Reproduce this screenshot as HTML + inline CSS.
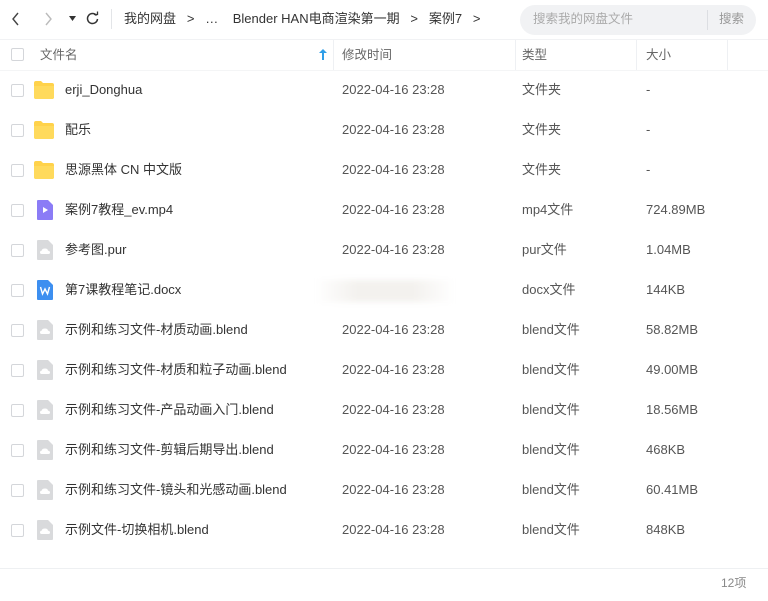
<!DOCTYPE html>
<html><head><meta charset="utf-8"><style>
*{margin:0;padding:0;box-sizing:border-box}
body{width:768px;height:601px;background:#fff;font-family:"Liberation Sans","Noto Sans CJK SC",sans-serif;color:#333;font-size:13px;position:relative;overflow:hidden}
.a{position:absolute;white-space:nowrap;line-height:20px}
.cb{position:absolute;left:11px;width:13px;height:13px;border:1px solid #d4d6da;border-radius:2px;background:#fff}
.g{color:#555}
.sep{position:absolute;top:40px;width:1px;height:30px;background:#eef0f3}
</style></head><body>
<svg class="a" style="left:10px;top:11px" width="12" height="16" viewBox="0 0 12 16"><path d="M8 2 L3 8 L8 14" stroke="#444" stroke-width="1.4" fill="none"/></svg>
<svg class="a" style="left:42px;top:11px" width="12" height="16" viewBox="0 0 12 16"><path d="M4 2 L9 8 L4 14" stroke="#bbb" stroke-width="1.4" fill="none"/></svg>
<svg class="a" style="left:69px;top:16px" width="8" height="6"><path d="M0 0 H7 L3.5 5Z" fill="#333"/></svg>
<svg class="a" style="left:85px;top:11px" width="15" height="15" viewBox="0 0 15 15"><path d="M11.5 4.5 A5 5 0 1 0 12.5 8" stroke="#333" stroke-width="1.5" fill="none"/><path d="M9 3.5 L12.5 3.5 L12.5 0.5" stroke="#333" stroke-width="1.3" fill="none"/></svg>
<div class="a" style="left:111px;top:9px;width:1px;height:20px;background:#e3e5e8"></div>
<div class="a" style="left:124px;top:9px;font-size:13px;color:#333">我的网盘 &nbsp;&nbsp;&gt; &nbsp;&nbsp;… &nbsp;&nbsp;&nbsp;Blender HAN电商渲染第一期 &nbsp;&nbsp;&gt; &nbsp;&nbsp;案例7 &nbsp;&nbsp;&gt;</div>
<div class="a" style="left:520px;top:5px;width:236px;height:30px;background:#f1f2f4;border-radius:15px"></div>
<div class="a" style="left:533px;top:9px;color:#aaa;font-size:12.5px">搜索我的网盘文件</div>
<div class="a" style="left:707px;top:10px;width:1px;height:20px;background:#dcdee2"></div>
<div class="a" style="left:719px;top:9px;color:#999;font-size:12.5px">搜索</div>
<div class="a" style="left:0;top:39px;width:768px;height:1px;background:#f1f2f4"></div>
<div class="cb" style="top:48px"></div>
<div class="a" style="left:40px;top:45px;font-size:12.5px;color:#666">文件名</div>
<svg class="a" style="left:319px;top:49px" width="8" height="11"><path d="M4 0 L8 4 H5 V11 H3 V4 H0Z" fill="#2e9ee8"/></svg>
<div class="sep" style="left:333px"></div>
<div class="a" style="left:342px;top:45px;font-size:12.5px;color:#666">修改时间</div>
<div class="sep" style="left:515px"></div>
<div class="a" style="left:522px;top:45px;font-size:12.5px;color:#666">类型</div>
<div class="sep" style="left:636px"></div>
<div class="a" style="left:646px;top:45px;font-size:12.5px;color:#666">大小</div>
<div class="sep" style="left:727px"></div>
<div class="a" style="left:0;top:70px;width:768px;height:1px;background:#f4f5f6"></div>
<div id="rows"></div>
<div class="a" style="left:315px;top:280px;width:140px;height:22px;background:linear-gradient(90deg,#fff,#f3f1ee 30%,#f3f1ee 70%,#fff);filter:blur(3px)"></div>
<div class="a" style="left:0;top:568px;width:768px;height:1px;background:#eef0f2"></div>
<div class="a" style="left:721px;top:573px;font-size:12px;color:#888">12项</div>
<script>
const F='<svg width="20" height="18" viewBox="0 0 20 18"><path d="M0 2 Q0 0 2 0 H7 L9 2 H18 Q20 2 20 4 V16 Q20 18 18 18 H2 Q0 18 0 16Z" fill="#ffd24a"/><path d="M0 5 H20 V16 Q20 18 18 18 H2 Q0 18 0 16Z" fill="#ffda5c"/></svg>';
const G='<svg width="16" height="20" viewBox="0 0 16 20"><path d="M1 0 H11 L16 5 V19 Q16 20 15 20 H1 Q0 20 0 19 V1 Q0 0 1 0Z" fill="#d9dadc"/><path d="M4.5 14 Q3 14 3 12.3 Q3 10.8 4.6 10.7 Q5 8.5 8 8.5 Q10.7 8.5 11 10.7 Q13 10.8 13 12.4 Q13 14 11.4 14Z" fill="#fff"/></svg>';
const V='<svg width="16" height="20" viewBox="0 0 16 20"><path d="M1 0 H11 L16 5 V19 Q16 20 15 20 H1 Q0 20 0 19 V1 Q0 0 1 0Z" fill="#8b7cf6"/><path d="M6 7 L11 10 L6 13Z" fill="#fff"/></svg>';
const W='<svg width="16" height="20" viewBox="0 0 16 20"><path d="M1 0 H11 L16 5 V19 Q16 20 15 20 H1 Q0 20 0 19 V1 Q0 0 1 0Z" fill="#3d8ff0"/><path d="M3.5 7 L5.5 14 L8 9 L10.5 14 L12.5 7" stroke="#fff" stroke-width="1.4" fill="none"/></svg>';
const d=[[F,'erji_Donghua','','文件夹','-'],[F,'配乐','','文件夹','-'],[F,'思源黑体 CN 中文版','','文件夹','-'],[V,'案例7教程_ev.mp4','','mp4文件','724.89MB'],[G,'参考图.pur','','pur文件','1.04MB'],[W,'第7课教程笔记.docx','x','docx文件','144KB'],[G,'示例和练习文件-材质动画.blend','','blend文件','58.82MB'],[G,'示例和练习文件-材质和粒子动画.blend','','blend文件','49.00MB'],[G,'示例和练习文件-产品动画入门.blend','','blend文件','18.56MB'],[G,'示例和练习文件-剪辑后期导出.blend','','blend文件','468KB'],[G,'示例和练习文件-镜头和光感动画.blend','','blend文件','60.41MB'],[G,'示例文件-切换相机.blend','','blend文件','848KB']];
let h='';d.forEach((r,i)=>{const y=80+i*40;
h+=`<div class="cb" style="top:${y+4}px"></div><div class="a" style="left:${r[0]==F?34:37}px;top:${y+(r[0]==F?1:0)}px;line-height:0">${r[0]}</div><div class="a" style="left:65px;top:${y}px">${r[1]}</div>`+(r[2]?'':`<div class="a g" style="left:342px;top:${y}px">2022-04-16 23:28</div>`)+`<div class="a g" style="left:522px;top:${y}px">${r[3]}</div><div class="a g" style="left:646px;top:${y}px">${r[4]}</div>`;});
document.getElementById('rows').outerHTML=h;
</script>
</body></html>
